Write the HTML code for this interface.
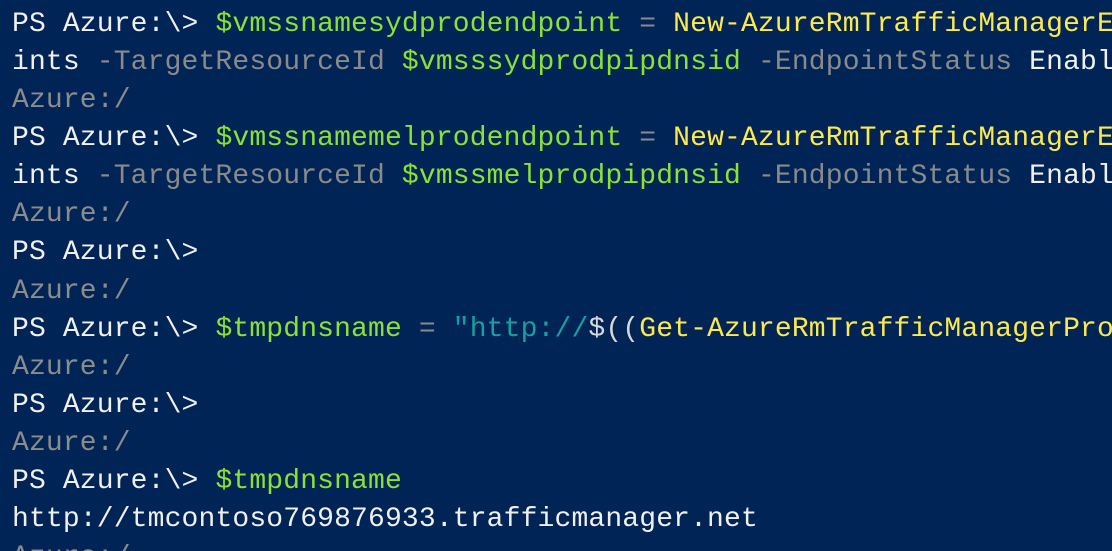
<html><head><style>
html,body{margin:0;background:#012456;width:1112px;height:551px;overflow:hidden}
pre{margin:0;padding:6px 0 0 12px;width:1100px;height:545px;overflow:hidden;font-family:"Liberation Mono",monospace;font-size:28px;letter-spacing:0.15px;line-height:38.08px;color:#f0f0f0;white-space:pre}
.g{color:#8ae234}.y{color:#fce94f}.p{color:#8a8a8a}.t{color:#1a9fa0}.a{color:#8c8c8c}.w{color:#d8d8d8}
</style></head><body><pre>PS Azure:\&gt; <span class="g">$vmssnamesydprodendpoint</span> <span class="p">=</span> <span class="y">New-AzureRmTrafficManagerE</span>
ints <span class="p">-TargetResourceId</span> <span class="g">$vmsssydprodpipdnsid</span> <span class="p">-EndpointStatus</span> Enabl
<span class="a">Azure:/</span>
PS Azure:\&gt; <span class="g">$vmssnamemelprodendpoint</span> <span class="p">=</span> <span class="y">New-AzureRmTrafficManagerE</span>
ints <span class="p">-TargetResourceId</span> <span class="g">$vmssmelprodpipdnsid</span> <span class="p">-EndpointStatus</span> Enabl
<span class="a">Azure:/</span>
PS Azure:\&gt;
<span class="a">Azure:/</span>
PS Azure:\&gt; <span class="g">$tmpdnsname</span> <span class="p">=</span> <span class="t">"http://</span><span class="w">$((</span><span class="y">Get-AzureRmTrafficManagerPro</span>
<span class="a">Azure:/</span>
PS Azure:\&gt;
<span class="a">Azure:/</span>
PS Azure:\&gt; <span class="g">$tmpdnsname</span>
http://tmcontoso769876933.trafficmanager.net
<span class="a">Azure:/</span>
</pre></body></html>
